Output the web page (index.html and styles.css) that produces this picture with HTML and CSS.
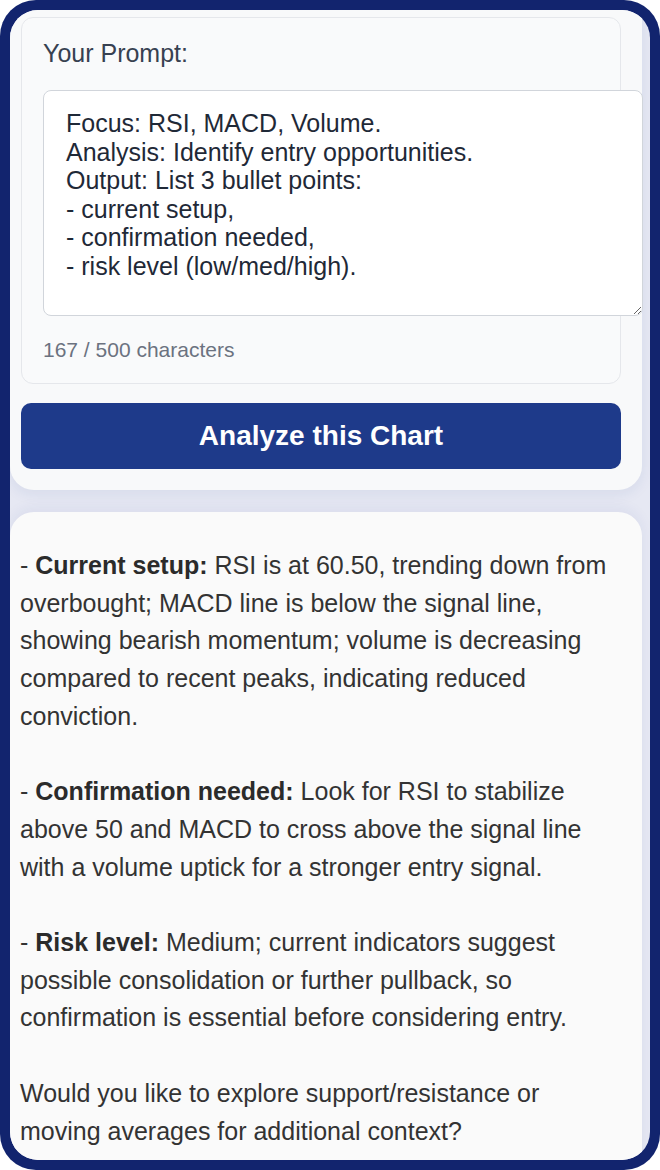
FILE: index.html
```html
<!DOCTYPE html>
<html lang="en">
<head>
<meta charset="utf-8">
<title>Analyze Chart</title>
<link rel="stylesheet" href="styles.css">
</head>
<body>
<div class="frame">
  <div class="screen">
    <section class="top-card">
      <div class="prompt-box">
        <label class="prompt-label" for="prompt">Your Prompt:</label>
        <textarea id="prompt" class="prompt-input">Focus: RSI, MACD, Volume.
Analysis: Identify entry opportunities.
Output: List 3 bullet points:
- current setup,
- confirmation needed,
- risk level (low/med/high).</textarea>
        <div class="char-count">167 / 500 characters</div>
      </div>
      <button class="analyze-btn" type="button">Analyze this Chart</button>
    </section>
    <section class="result-card">
      <p>- <strong>Current setup:</strong> RSI is at 60.50, trending down from overbought; MACD line is below the signal line, showing bearish momentum; volume is decreasing compared to recent peaks, indicating reduced conviction.</p>
      <p>- <strong>Confirmation needed:</strong> Look for RSI to stabilize above 50 and MACD to cross above the signal line with a volume uptick for a stronger entry signal.</p>
      <p>- <strong>Risk level:</strong> Medium; current indicators suggest possible consolidation or further pullback, so confirmation is essential before considering entry.</p>
      <p>Would you like to explore support/resistance or moving averages for additional context?</p>
    </section>
  </div>
</div>
</body>
</html>
```

FILE: styles.css
```css
* { box-sizing: border-box; }

html, body {
  margin: 0;
  padding: 0;
  background: #ffffff;
  font-family: "Liberation Sans", Arial, sans-serif;
}

.frame {
  width: 660px;
  height: 1170px;
  padding: 10px;
  border-radius: 36px;
  background: #12246e;
}

.screen {
  height: 100%;
  border-radius: 28px;
  overflow: hidden;
  background: #e6e8f3;
  padding-right: 8px;
  display: flex;
  flex-direction: column;
  gap: 22px;
}

.top-card {
  background: #f8f9fa;
  padding: 7px 21px 21px 11px;
  border-radius: 0 0 24px 24px;
  box-shadow: 0 4px 14px rgba(30, 58, 138, 0.08);
}

.prompt-box {
  border: 1px solid #e5e7eb;
  border-radius: 12px;
  background: #f9fafb;
  padding: 19px 0 19px 21px;
}

.prompt-label {
  display: block;
  font-size: 25px;
  line-height: 33px;
  color: #374151;
}

.prompt-input {
  display: block;
  margin-top: 20px;
  width: 600px;
  height: 226px;
  padding: 18px 22px;
  font-family: "Liberation Sans", Arial, sans-serif;
  font-size: 25px;
  line-height: 28.6px;
  color: #1f2937;
  background: #ffffff;
  border: 1px solid #d1d5db;
  border-radius: 8px;
  resize: both;
}

.char-count {
  margin-top: 20px;
  font-size: 21px;
  line-height: 28px;
  color: #6b7280;
}

.analyze-btn {
  display: block;
  width: 100%;
  height: 66px;
  margin-top: 19px;
  border: 0;
  border-radius: 10px;
  background: #1e3a8a;
  color: #ffffff;
  font-family: "Liberation Sans", Arial, sans-serif;
  font-size: 28px;
  font-weight: bold;
}

.result-card {
  flex: 1;
  background: #fafafa;
  border-radius: 24px 24px 0 0;
  padding: 35px 24px 0 10px;
  box-shadow: 0 -4px 14px rgba(30, 58, 138, 0.06);
}

.result-card p {
  margin: 0 0 37.7px 0;
  font-size: 25px;
  line-height: 37.7px;
  color: #333333;
}

.result-card strong {
  color: #2b2b2b;
}
```
